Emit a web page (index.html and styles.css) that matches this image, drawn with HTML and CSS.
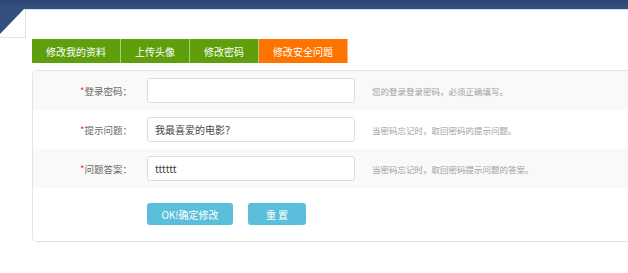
FILE: index.html
```html
<!DOCTYPE html>
<html lang="zh-CN">
<head>
<meta charset="utf-8">
<title>修改安全问题</title>
<link rel="stylesheet" href="styles.css">
</head>
<body>
<div class="topbar"></div>
<svg class="corner" width="26" height="29" viewBox="0 0 26 29">
  <rect x="0" y="0" width="26" height="29" fill="#ffffff"/>
  <polygon points="0,0 24,0 0,25" fill="#33507f"/>
  <rect x="25" y="0" width="1" height="29" fill="#e2e2e2"/>
  <rect x="0" y="28" width="26" height="1" fill="#e2e2e2"/>
</svg>
<nav class="tabs">
  <a class="tab t1">修改我的资料</a>
  <a class="tab t2">上传头像</a>
  <a class="tab t3">修改密码</a>
  <a class="tab active">修改安全问题</a>
</nav>
<form class="box">
  <div class="row shade">
    <label class="label"><span class="req">*</span>登录密码：</label>
    <input class="field" type="password" value="">
    <span class="hint">您的登录登录密码，必须正确填写。</span>
  </div>
  <div class="row">
    <label class="label"><span class="req">*</span>提示问题：</label>
    <input class="field" type="text" value="我最喜爱的电影？">
    <span class="hint">当密码忘记时，取回密码的提示问题。</span>
  </div>
  <div class="row shade">
    <label class="label"><span class="req">*</span>问题答案：</label>
    <input class="field" type="text" value="tttttt">
    <span class="hint">当密码忘记时，取回密码提示问题的答案。</span>
  </div>
  <div class="actions">
    <button class="btn ok" type="button">OK!确定修改</button>
    <button class="btn reset" type="button">重 置</button>
  </div>
</form>
</body>
</html>
```

FILE: styles.css
```css
html, body {
  margin: 0;
  padding: 0;
  background: #ffffff;
  overflow: hidden;
  font-family: "Noto Sans CJK SC", "Noto Sans", sans-serif;
}
.topbar {
  height: 9px;
  background: linear-gradient(#2c4574, #35507f);
  border-bottom: 1px solid #d8e3ef;
}
.corner {
  display: block;
  margin-top: -1px;
}
.tabs {
  display: flex;
  margin: 1px 0 0 32px;
  height: 24px;
}
.tab {
  display: flex;
  align-items: center;
  justify-content: center;
  color: #ffffff;
  font-size: 10px;
  background: #5e9f0b;
  border-right: 1px solid #a9cf7a;
  height: 24px;
}
.t1 { width: 88px; }
.t2 { width: 68px; }
.t3 { width: 68px; }
.active {
  width: 88px;
  background: #ff7400;
  border-right: 1px solid #ffb27a;
}
.box {
  margin: 7px 0 0 32px;
  border: 1px solid #e4e4e4;
  border-right: 0;
  border-radius: 5px 0 0 5px;
  overflow: hidden;
}
.row {
  display: flex;
  align-items: center;
  height: 39px;
}
.shade { background: #f9f9f9; }
.label {
  width: 99px;
  text-align: right;
  font-family: "Noto Sans CJK TC", "Noto Sans CJK SC", sans-serif;
  font-size: 9.5px;
  color: #666666;
  margin-right: 15px;
}
.req { color: #e33; }
.field {
  box-sizing: border-box;
  width: 208px;
  height: 25px;
  border: 1px solid #dddddd;
  border-radius: 3px;
  background: #ffffff;
  padding: 0 7px;
  font-family: "Noto Sans CJK SC", "Noto Sans", sans-serif;
  font-size: 10px;
  color: #444444;
  margin: 0;
}
.hint {
  margin-left: 17px;
  font-size: 8.5px;
  color: #a0a0a0;
}
.actions {
  display: flex;
  gap: 15px;
  padding: 15px 0 16px 114px;
}
.btn {
  height: 22px;
  border: 0;
  border-radius: 3px;
  background: #5bbfdc;
  color: #ffffff;
  font-family: "Noto Sans CJK SC", "Noto Sans", sans-serif;
  font-size: 10px;
  padding: 0;
  margin: 0;
}
.ok { width: 86px; }
.reset { width: 58px; }
```
